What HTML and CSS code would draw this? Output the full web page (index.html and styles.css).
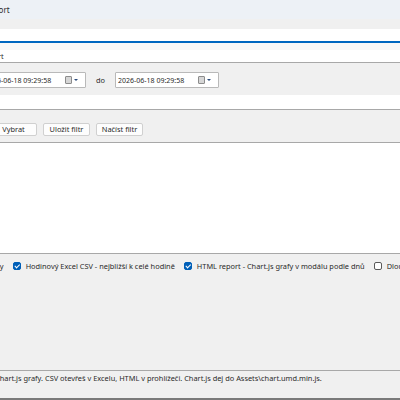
FILE: index.html
```html
<!DOCTYPE html>
<html lang="cs">
<head>
<meta charset="utf-8">
<title>Export</title>
<link rel="stylesheet" href="styles.css">
</head>
<body>
<div class="window">
  <header class="titlebar"><span class="title">Export</span></header>
  <div class="spacer"></div>
  <div class="search"></div>
  <div class="search-shade"></div>
  <div class="tab-row"><span class="tab-label">Export</span></div>

  <section class="filter">
    <div class="picker picker-from">
      <span class="picker-text">2026-06-18 09:29:58</span>
      <span class="cal"></span>
      <span class="drop"></span>
    </div>
    <span class="to-label">do</span>
    <div class="picker">
      <span class="picker-text">2026-06-18 09:29:58</span>
      <span class="cal"></span>
      <span class="drop"></span>
    </div>
  </section>

  <div class="white-strip"></div>

  <section class="actions">
    <button class="btn btn-first">Vybrat</button>
    <button class="btn">Uložit filtr</button>
    <button class="btn">Načíst filtr</button>
  </section>

  <div class="grid"></div>

  <section class="options">
    <label class="opt opt-first"><span class="opt-text">CSV souhrny</span></label>
    <label class="opt"><span class="box checked"></span><span class="opt-text">Hodinový Excel CSV - nejbližší k celé hodině</span></label>
    <label class="opt"><span class="box checked"></span><span class="opt-text">HTML report - Chart.js grafy v modálu podle dnů</span></label>
    <label class="opt"><span class="box"></span><span class="opt-text">Dlouhý formát</span></label>
  </section>

  <footer class="status"><span class="status-text">Chart.js grafy. CSV otevřeš v Excelu, HTML v prohlížeči. Chart.js dej do Assets\chart.umd.min.js.</span></footer>
</div>
</body>
</html>
```

FILE: styles.css
```css
html, body {
  margin: 0;
  padding: 0;
  width: 400px;
  height: 400px;
  overflow: hidden;
  background: #f0f0f0;
}

.window {
  font-family: "Noto Sans", "Open Sans", sans-serif;
  font-size: 7.4px;
  color: #2a2a2a;
  display: flex;
  flex-direction: column;
  width: 400px;
  height: 400px;
  overflow: hidden;
}

/* window caption */
.titlebar {
  height: 19px;
  background: #edf1f6;
  display: flex;
  align-items: center;
  white-space: nowrap;
}
.title {
  margin-left: -15px;
  font-size: 8px;
}

.spacer { height: 10px; background: #f0f0f0; }

.search {
  height: 12px;
  background: #ffffff;
  border-bottom: 2px solid #0067c0;
}
.search-shade { height: 7px; background: #f8f8f8; }

.tab-row {
  height: 12px;
  background: #ffffff;
  border-bottom: 1px solid #a8a8a8;
  display: flex;
  align-items: center;
  white-space: nowrap;
}
.tab-label { margin-left: -19px; }

/* date range */
.filter {
  height: 32px;
  box-sizing: border-box;
  padding-top: 9px;
  display: flex;
  align-items: flex-start;
  gap: 10px;
  white-space: nowrap;
}
.picker {
  width: 104px;
  height: 16px;
  box-sizing: border-box;
  background: #ffffff;
  border: 1px solid #b9b9b9;
  border-radius: 1px;
  display: flex;
  align-items: center;
  padding-left: 2px;
}
.picker-from { margin-left: -18px; }
.picker-text { flex: 1; font-size: 7px; }
.cal {
  width: 5px;
  height: 6px;
  border: 1px solid #8c8c8c;
  background: #d6d6d6;
  border-radius: 1px;
  margin-right: 2px;
}
.drop {
  width: 0;
  height: 0;
  border-left: 2px solid transparent;
  border-right: 2px solid transparent;
  border-top: 2px solid #2b4a7a;
  margin-right: 7px;
}
.to-label { line-height: 16px; }

.white-strip {
  height: 14px;
  background: #ffffff;
  border-bottom: 1px solid #a8a8a8;
}

/* filter buttons */
.actions {
  height: 33px;
  box-sizing: border-box;
  padding-top: 13px;
  border-bottom: 1px solid #a8a8a8;
  display: flex;
  align-items: flex-start;
  gap: 6px;
}
.btn {
  font: inherit;
  color: #2a2a2a;
  height: 13px;
  width: 47px;
  padding: 0;
  background: #fdfdfd;
  border: 1px solid #d0d0d0;
  border-radius: 2px;
  line-height: 11px;
}
.btn-first { margin-left: -10px; }

.grid {
  height: 110px;
  background: #ffffff;
  border-bottom: 1px solid #a8a8a8;
}

/* export options */
.options {
  height: 116px;
  box-sizing: border-box;
  padding-top: 7px;
  display: flex;
  align-items: flex-start;
  gap: 9px;
  white-space: nowrap;
}
.opt {
  display: flex;
  align-items: center;
  gap: 5px;
  height: 9px;
}
.opt-first { margin-left: -40px; }
.box {
  width: 8px;
  height: 8px;
  box-sizing: border-box;
  border: 1px solid #5a5a5a;
  border-radius: 2px;
  background: #ffffff;
  position: relative;
}
.box.checked {
  background: #005fb8;
  border-color: #005fb8;
}
.box.checked::after {
  content: "";
  position: absolute;
  left: 2px;
  top: 0px;
  width: 1.5px;
  height: 3.5px;
  border-right: 1px solid #ffffff;
  border-bottom: 1px solid #ffffff;
  transform: rotate(45deg);
}

.status {
  flex: 1;
  border-top: 1px solid #a8a8a8;
  border-bottom: 2px solid #7a7a7a;
  display: flex;
  align-items: flex-start;
  white-space: nowrap;
}
.status-text {
  margin-left: -5px;
  margin-top: 1px;
  line-height: 12px;
}
```
